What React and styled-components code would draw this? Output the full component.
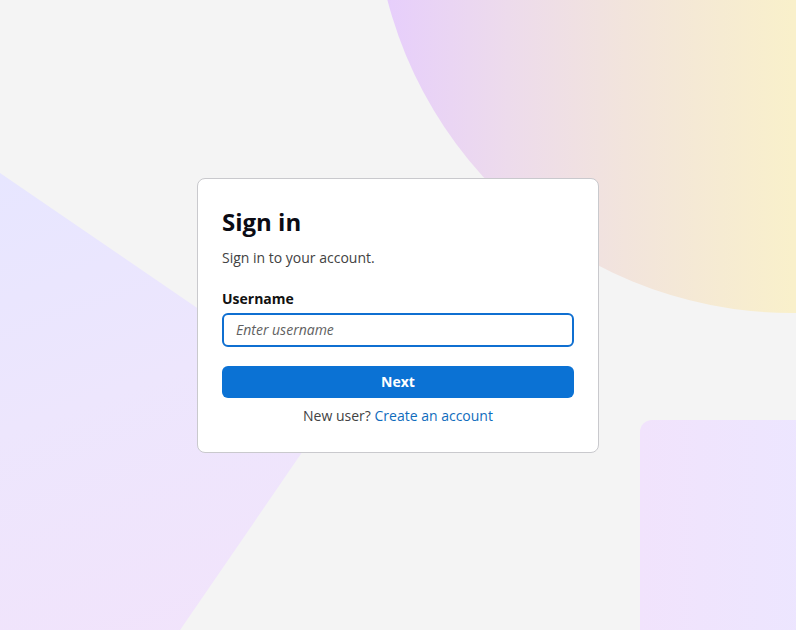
import styled, { createGlobalStyle } from 'styled-components';

const GlobalStyle = createGlobalStyle`
  * {
    box-sizing: border-box;
  }
  html, body {
    margin: 0;
    padding: 0;
  }
  body {
    font-family: 'Open Sans', 'Noto Sans', sans-serif;
    background: #f4f4f4;
    color: #242424;
  }
`;

const Page = styled.div`
  position: relative;
  min-height: 100vh;
  overflow: hidden;
  display: flex;
  align-items: center;
  justify-content: center;
  background: #f4f4f4;
`;

// decorative blobs behind the card
const Circle = styled.div`
  position: absolute;
  left: 374px;
  top: -523px;
  width: 836px;
  height: 836px;
  border-radius: 50%;
  background: linear-gradient(90deg, #e6cdfd 0%, #eddbec 16%, #f2e4dc 30%, #f9f0cb 50%, #f9f0cb 100%);
`;

const Wedge = styled.div`
  position: absolute;
  left: 0;
  top: 173px;
  width: 336px;
  height: 457px;
  clip-path: polygon(0 0, 100% 50.3%, 53.6% 100%, 0 100%);
  background: linear-gradient(160deg, #e7e6ff 0%, #ede6fd 45%, #f2e3fb 100%);
`;

const Slab = styled.div`
  position: absolute;
  left: 640px;
  top: 420px;
  width: 180px;
  height: 240px;
  border-top-left-radius: 12px;
  background: linear-gradient(90deg, #f1e3fc 0%, #ece6ff 100%);
`;

const Card = styled.div`
  position: relative;
  width: 402px;
  background: #ffffff;
  border: 1px solid #c9c9cd;
  border-radius: 8px;
  padding: 27px 24px 26px;
  display: flex;
  flex-direction: column;
`;

const Title = styled.h1`
  margin: 0;
  font-size: 24px;
  line-height: 32px;
  font-weight: 700;
  color: #0b0b14;
`;

const Subtitle = styled.p`
  margin: 10px 0 0;
  font-size: 14px;
  line-height: 20px;
  color: #424242;
`;

const Field = styled.div`
  display: flex;
  flex-direction: column;
  gap: 4px;
  margin-top: 21px;
`;

const Label = styled.label`
  font-size: 14px;
  line-height: 20px;
  font-weight: 700;
  color: #111111;
`;

const Input = styled.input`
  height: 34px;
  width: 100%;
  border: 2px solid #0f6fd1;
  border-radius: 6px;
  padding: 0 12px;
  font-family: inherit;
  font-size: 14px;
  color: #242424;
  outline: none;
  background: #ffffff;

  &::placeholder {
    color: #616161;
    font-style: italic;
  }
`;

const Button = styled.button`
  margin-top: 19px;
  height: 32px;
  width: 100%;
  border: none;
  border-radius: 6px;
  background: #0b72d4;
  color: #ffffff;
  font-family: inherit;
  font-size: 14px;
  font-weight: 700;
  cursor: pointer;
`;

const Footer = styled.p`
  margin: 8px 0 0;
  text-align: center;
  font-size: 14px;
  line-height: 20px;
  color: #424242;

  a {
    color: #0f6cbd;
    text-decoration: none;
  }
`;

function App() {
  return (
    <>
      <GlobalStyle />
      <Page>
        <Circle />
        <Wedge />
        <Slab />
        <Card>
          <Title>Sign in</Title>
          <Subtitle>Sign in to your account.</Subtitle>
          <Field>
            <Label htmlFor="username">Username</Label>
            <Input id="username" placeholder="Enter username" />
          </Field>
          <Button>Next</Button>
          <Footer>
            New user? <a href="#">Create an account</a>
          </Footer>
        </Card>
      </Page>
    </>
  );
}

export default App;
